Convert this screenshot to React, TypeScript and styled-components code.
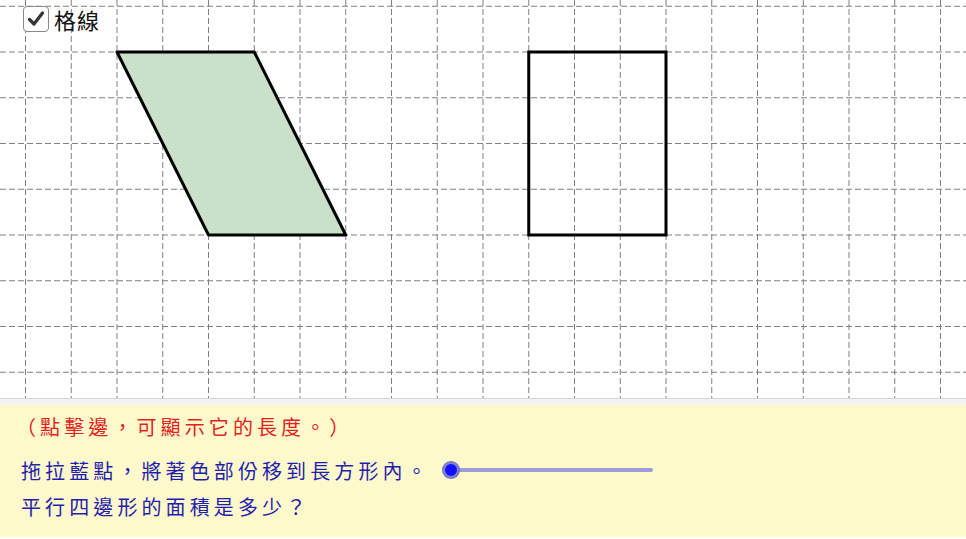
import React, { useState } from 'react';
import styled, { createGlobalStyle } from 'styled-components';

const GlobalStyle = createGlobalStyle`
  html, body {
    margin: 0;
    padding: 0;
    background: #ffffff;
  }
  body {
    font-family: "Noto Sans CJK TC", "Noto Sans", sans-serif;
  }
`;

const STEP = 45.75;
const X0 = 25.5;
const Y0 = 6.25;
const WIDTH = 966;
const HEIGHT = 398;

const gx = (i: number) => X0 + STEP * i;
const gy = (j: number) => Y0 + STEP * j;

const Page = styled.div`
  width: 966px;
  height: 539px;
  display: flex;
  flex-direction: column;
  overflow: hidden;
`;

const Canvas = styled.div`
  position: relative;
  width: 100%;
  height: ${HEIGHT}px;
  background: #ffffff;
  flex-shrink: 0;
`;

const Board = styled.svg`
  display: block;
`;

const GridToggle = styled.label`
  position: absolute;
  top: 6px;
  left: 23px;
  display: flex;
  align-items: center;
  gap: 5px;
  cursor: pointer;
  user-select: none;
`;

const Box = styled.span`
  width: 24px;
  height: 24px;
  border: 1px solid #8a8a8a;
  border-radius: 4px;
  background: #ffffff;
  display: flex;
  align-items: center;
  justify-content: center;
`;

const ToggleLabel = styled.span`
  font-size: 22px;
  line-height: 26px;
  color: #111111;
  letter-spacing: 1px;
`;

const Divider = styled.div`
  height: 6px;
  flex-shrink: 0;
  border-top: 1px solid #d6d6d6;
  background: #f3f3f3;
`;

const Panel = styled.div`
  height: 132px;
  flex-shrink: 0;
  background: #fff9cc;
  padding: 6px 0 0 21px;
  box-sizing: border-box;
  display: flex;
  flex-direction: column;
`;

const Line = styled.div<{ $color: string; $top: number; $indent?: number }>`
  display: flex;
  align-items: center;
  height: 30px;
  margin-top: ${(p) => p.$top}px;
  margin-left: ${(p) => p.$indent ?? 0}px;
  font-size: 20px;
  letter-spacing: 4.1px;
  color: ${(p) => p.$color};
  white-space: nowrap;
`;

const Slider = styled.div`
  position: relative;
  width: 202px;
  height: 4px;
  margin-left: 20px;
  border-radius: 2px;
  background: #9d9ddc;
`;

const Knob = styled.span`
  position: absolute;
  left: -8px;
  top: -6px;
  width: 12px;
  height: 12px;
  border-radius: 50%;
  background: #1010ff;
  border: 2px solid #8282cc;
  box-shadow: 0 0 0 1px #6b6bbf;
`;

function Grid() {
  const cols = Array.from({ length: 21 }, (_, i) => gx(i));
  const rows = Array.from({ length: 9 }, (_, j) => gy(j));
  return (
    <g stroke="#7f7f7f" strokeWidth={1} strokeDasharray="6 3">
      {cols.map((x) => (
        <line key={`c${x}`} x1={x} y1={0} x2={x} y2={HEIGHT} />
      ))}
      {rows.map((y) => (
        <line key={`r${y}`} x1={0} y1={y} x2={WIDTH} y2={y} />
      ))}
    </g>
  );
}

export default function App() {
  const [showGrid, setShowGrid] = useState(true);

  const para = [
    [gx(2), gy(1)],
    [gx(5), gy(1)],
    [gx(7), gy(5)],
    [gx(4), gy(5)],
  ]
    .map((p) => p.join(','))
    .join(' ');

  return (
    <>
      <GlobalStyle />
      <Page>
        <Canvas>
          <Board width={WIDTH} height={HEIGHT} viewBox={`0 0 ${WIDTH} ${HEIGHT}`}>
            {showGrid && <Grid />}
            <polygon points={para} fill="#c9e0ca" stroke="#000" strokeWidth={3} strokeLinejoin="round" />
            <rect
              x={gx(11)}
              y={gy(1)}
              width={STEP * 3}
              height={STEP * 4}
              fill="none"
              stroke="#000"
              strokeWidth={3}
            />
          </Board>
          <GridToggle onClick={() => setShowGrid(!showGrid)}>
            <Box>
              {showGrid && (
                <svg width="20" height="20" viewBox="0 0 20 20">
                  <path
                    d="M3.5 10.5 L8 15 L16.5 4"
                    fill="none"
                    stroke="#333"
                    strokeWidth={3.2}
                    strokeLinecap="round"
                    strokeLinejoin="round"
                  />
                </svg>
              )}
            </Box>
            <ToggleLabel>格線</ToggleLabel>
          </GridToggle>
        </Canvas>
        <Divider />
        <Panel>
          <Line $color="#e41f1f" $top={0} $indent={-5}>（點擊邊，可顯示它的長度。）</Line>
          <Line $color="#1f1fae" $top={14}>
            拖拉藍點，將著色部份移到長方形內。
            <Slider>
              <Knob />
            </Slider>
          </Line>
          <Line $color="#1f1fae" $top={6}>平行四邊形的面積是多少？</Line>
        </Panel>
      </Page>
    </>
  );
}
